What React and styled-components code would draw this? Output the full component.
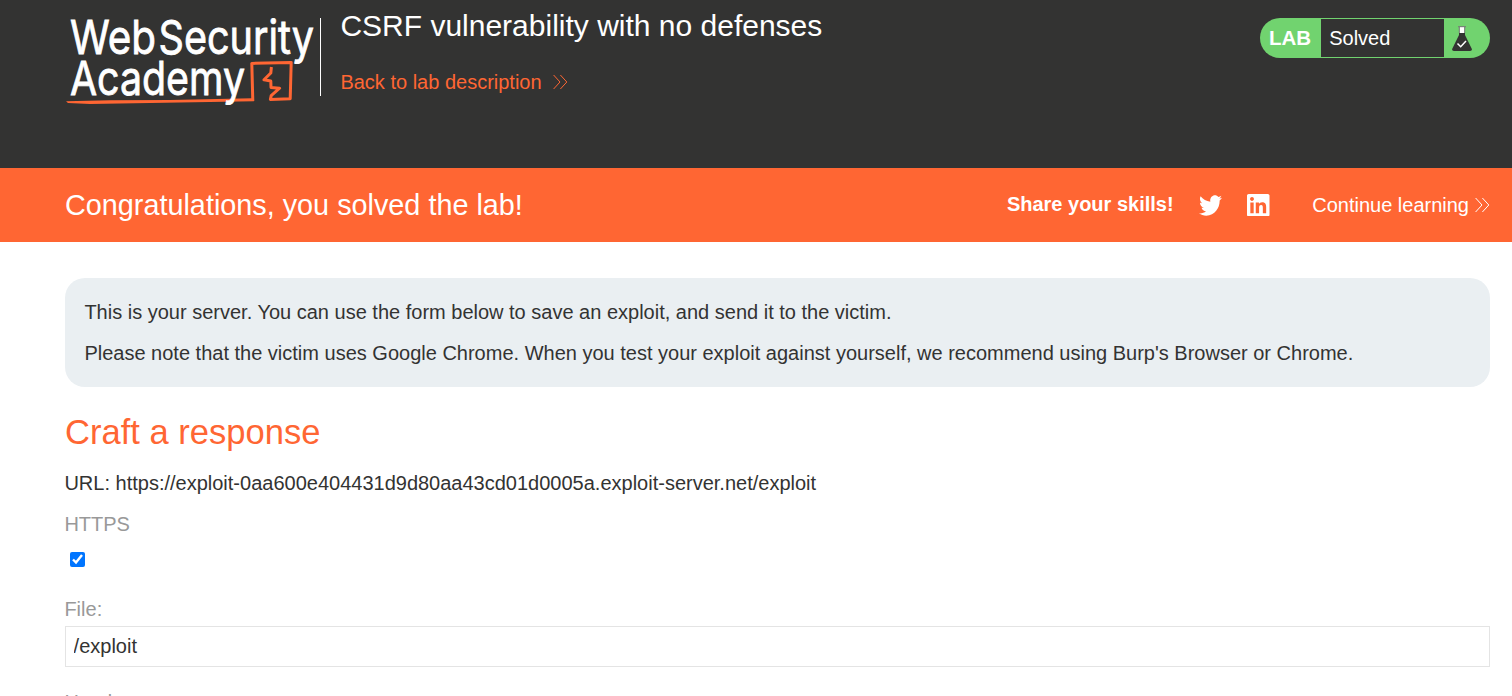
import React from "react";
import styled, { createGlobalStyle } from "styled-components";
import { FaTwitter } from "react-icons/fa";

const GlobalStyle = createGlobalStyle`
  *, *::before, *::after { box-sizing: border-box; }
  html, body { margin: 0; }
  body {
    background: #fff;
    color: #333332;
    font: 20px/25px Arial, "Liberation Sans", sans-serif;
    overflow: hidden;
  }
`;

const Page = styled.div`
  height: 696px;
  overflow: hidden;
`;

const Header = styled.header`
  display: flex;
  align-items: flex-start;
  height: 168px;
  padding: 0 22px 0 65px;
  background: #333332;
  color: #fff;
`;

const Logo = styled.svg`
  flex: none;
  width: 255px;
  height: 120px;
`;

const LogoText = styled.text`
  fill: #fff;
  stroke: #fff;
  stroke-width: 0.8px;
  font: 400 47px Inter, sans-serif;
`;

const Divider = styled.div`
  flex: none;
  width: 1px;
  height: 78px;
  margin-top: 18px;
  background: #fff;
`;

const TitleBlock = styled.div`
  flex: 1;
  display: flex;
  flex-direction: column;
  align-items: flex-start;
  gap: 26px;
  padding: 8px 0 0 19.4px;
`;

const Title = styled.h2`
  margin: 0;
  font-size: 30px;
  font-weight: 400;
  line-height: 36px;
`;

const TextLink = styled.a`
  display: flex;
  align-items: center;
  gap: ${(p) => p.$gap}px;
  color: ${(p) => p.$color};
  line-height: 24px;
  text-decoration: none;
`;

const Chevrons = styled.svg`
  flex: none;
  width: 16px;
  height: 16px;
  fill: none;
  stroke: currentColor;
  stroke-width: 1;
`;

const Badge = styled.div`
  display: flex;
  width: 230px;
  height: 40px;
  margin-top: 18px;
  padding: 1px 0;
  border-radius: 20px;
  background: #71d36f;
  overflow: hidden;
  line-height: 38px;
`;

const BadgeName = styled.span`
  width: 61px;
  padding-left: 9px;
  font-size: 20.5px;
  font-weight: 700;
`;

const BadgeStatus = styled.span`
  flex: 1;
  padding-left: 8.2px;
  background: #333332;
`;

const BadgeIcon = styled.span`
  display: flex;
  width: 46px;
  padding: 7px 0 0 8px;
`;

const Banner = styled.section`
  display: flex;
  align-items: center;
  height: 74px;
  padding: 0 22px 0 65px;
  background: #ff6633;
  color: #fff;
`;

const BannerTitle = styled.h4`
  flex: 1;
  margin: 0;
  font-size: 28.8px;
  font-weight: 400;
  line-height: 36px;
`;

const ShareLabel = styled.span`
  padding-bottom: 2px;
  font-weight: 700;
`;

const SocialLinks = styled.div`
  display: flex;
  align-items: center;
  gap: 25.5px;
  margin: 0 42.6px 0 25px;
`;

const TwitterIcon = styled(FaTwitter)`
  width: 23px;
  height: 25px;
`;

const LinkedInIcon = styled.svg`
  width: 22.5px;
  height: 22.5px;
  fill: currentColor;
`;

const Main = styled.main`
  padding: 36px 22px 0 65px;
`;

const Notice = styled.div`
  display: flex;
  flex-direction: column;
  gap: 16px;
  height: 109px;
  padding: 22px 20px;
  border-radius: 20px;
  background: #eaeff2;
`;

const Paragraph = styled.p`
  margin: 0;
  text-indent: -0.6px;
`;

const Heading = styled.h3`
  margin: 25px 0 18px;
  color: #ff6633;
  font-size: 34.56px;
  font-weight: 400;
  line-height: 41px;
`;

const Label = styled.label`
  display: block;
  margin-top: ${(p) => p.$top}px;
  color: #999;
  text-indent: -0.6px;
`;

const Checkbox = styled.input`
  display: block;
  width: 15px;
  height: 15px;
  margin: 15px 0 0 5px;
  accent-color: #0075ff;
`;

const TextInput = styled.input`
  display: block;
  width: 100%;
  height: 41px;
  margin-top: 4px;
  padding: 0 7.6px;
  border: 1px solid #e4e4e4;
  border-radius: 0;
  background: #fff;
  color: #333332;
  font: inherit;
  outline: none;
`;

const DoubleArrow = () => (
  <Chevrons viewBox="0 0 16 16">
    <path d="M1.6 1 8 8 1.6 15M8.4 1 14.8 8 8.4 15" />
  </Chevrons>
);

const AcademyLogo = () => (
  <Logo viewBox="65 0 255 120">
    <LogoText x="70" y="54" textLength="86" lengthAdjust="spacingAndGlyphs">Web</LogoText>
    <LogoText x="158.5" y="54" textLength="155.5" lengthAdjust="spacingAndGlyphs">Security</LogoText>
    <path d="M66 101.2 110 100.2 170 100 252 98.2 254 101.2 150 103 90 104 68 103Z" fill="#ff6633" />
    <path
      d="M252.8 101 251.8 63.4 291.2 62.4 290.2 98.8 270.4 99.4 271.2 95.6 279.6 88.2 271 87.4 270.8 81 264 79.8 270.8 73 271.4 67"
      fill="none"
      stroke="#ff6633"
      strokeWidth="3"
      strokeLinejoin="round"
    />
    <LogoText x="70" y="95" textLength="175" lengthAdjust="spacingAndGlyphs">Academy</LogoText>
  </Logo>
);

const Flask = () => (
  <svg width="20" height="25" viewBox="0 0 20 25">
    <path d="M7 7h6v2l7 14.2Q20 25 18 25H2Q0 25 0 23.2L7 9Z" fill="#333332" />
    <path d="M7.5 1h5v6h-5Z" fill="#fff" />
    <path d="M6 .7h8M7.3 1v6M12.7 1v6" fill="none" stroke="#777" strokeWidth="1" />
    <path d="M5.5 17.5 8.7 20.7 14 15" fill="none" stroke="#fff" strokeWidth="1.5" />
  </svg>
);

export default function App() {
  return (
    <Page>
      <GlobalStyle />
      <Header>
        <AcademyLogo />
        <Divider />
        <TitleBlock>
          <Title>CSRF vulnerability with no defenses</Title>
          <TextLink $gap={10} $color="#ff6633">
            Back to lab description
            <DoubleArrow />
          </TextLink>
        </TitleBlock>
        <Badge>
          <BadgeName>LAB</BadgeName>
          <BadgeStatus>Solved</BadgeStatus>
          <BadgeIcon>
            <Flask />
          </BadgeIcon>
        </Badge>
      </Header>
      <Banner>
        <BannerTitle>Congratulations, you solved the lab!</BannerTitle>
        <ShareLabel>Share your skills!</ShareLabel>
        <SocialLinks>
          <TwitterIcon preserveAspectRatio="none" />
          <LinkedInIcon viewBox="0 0 24 24">
            <path d="M20.447 20.452h-3.554v-5.569c0-1.328-.027-3.037-1.852-3.037-1.853 0-2.136 1.445-2.136 2.939v5.667H9.351V9h3.414v1.561h.046c.477-.9 1.637-1.85 3.37-1.85 3.601 0 4.267 2.37 4.267 5.455v6.286zM5.337 7.433c-1.144 0-2.063-.926-2.063-2.065 0-1.138.92-2.063 2.063-2.063 1.14 0 2.064.925 2.064 2.063 0 1.139-.925 2.065-2.064 2.065zm1.782 13.019H3.555V9h3.564v11.452zM22.225 0H1.771C.792 0 0 .774 0 1.729v20.542C0 23.227.792 24 1.771 24h20.451C23.2 24 24 23.227 24 22.271V1.729C24 .774 23.2 0 22.222 0h.003z" />
          </LinkedInIcon>
        </SocialLinks>
        <TextLink $gap={5} $color="#fff">
          Continue learning
          <DoubleArrow />
        </TextLink>
      </Banner>
      <Main>
        <Notice>
          <Paragraph>
            This is your server. You can use the form below to save an exploit, and send it to the victim.
          </Paragraph>
          <Paragraph>
            Please note that the victim uses Google Chrome. When you test your exploit against yourself, we recommend
            using Burp's Browser or Chrome.
          </Paragraph>
        </Notice>
        <Heading>Craft a response</Heading>
        <Paragraph>URL: https://exploit-0aa600e404431d9d80aa43cd01d0005a.exploit-server.net/exploit</Paragraph>
        <Label $top={16}>HTTPS</Label>
        <Checkbox type="checkbox" defaultChecked />
        <Label $top={30}>File:</Label>
        <TextInput type="text" defaultValue="/exploit" />
        <Label $top={23}>Head:</Label>
      </Main>
    </Page>
  );
}
